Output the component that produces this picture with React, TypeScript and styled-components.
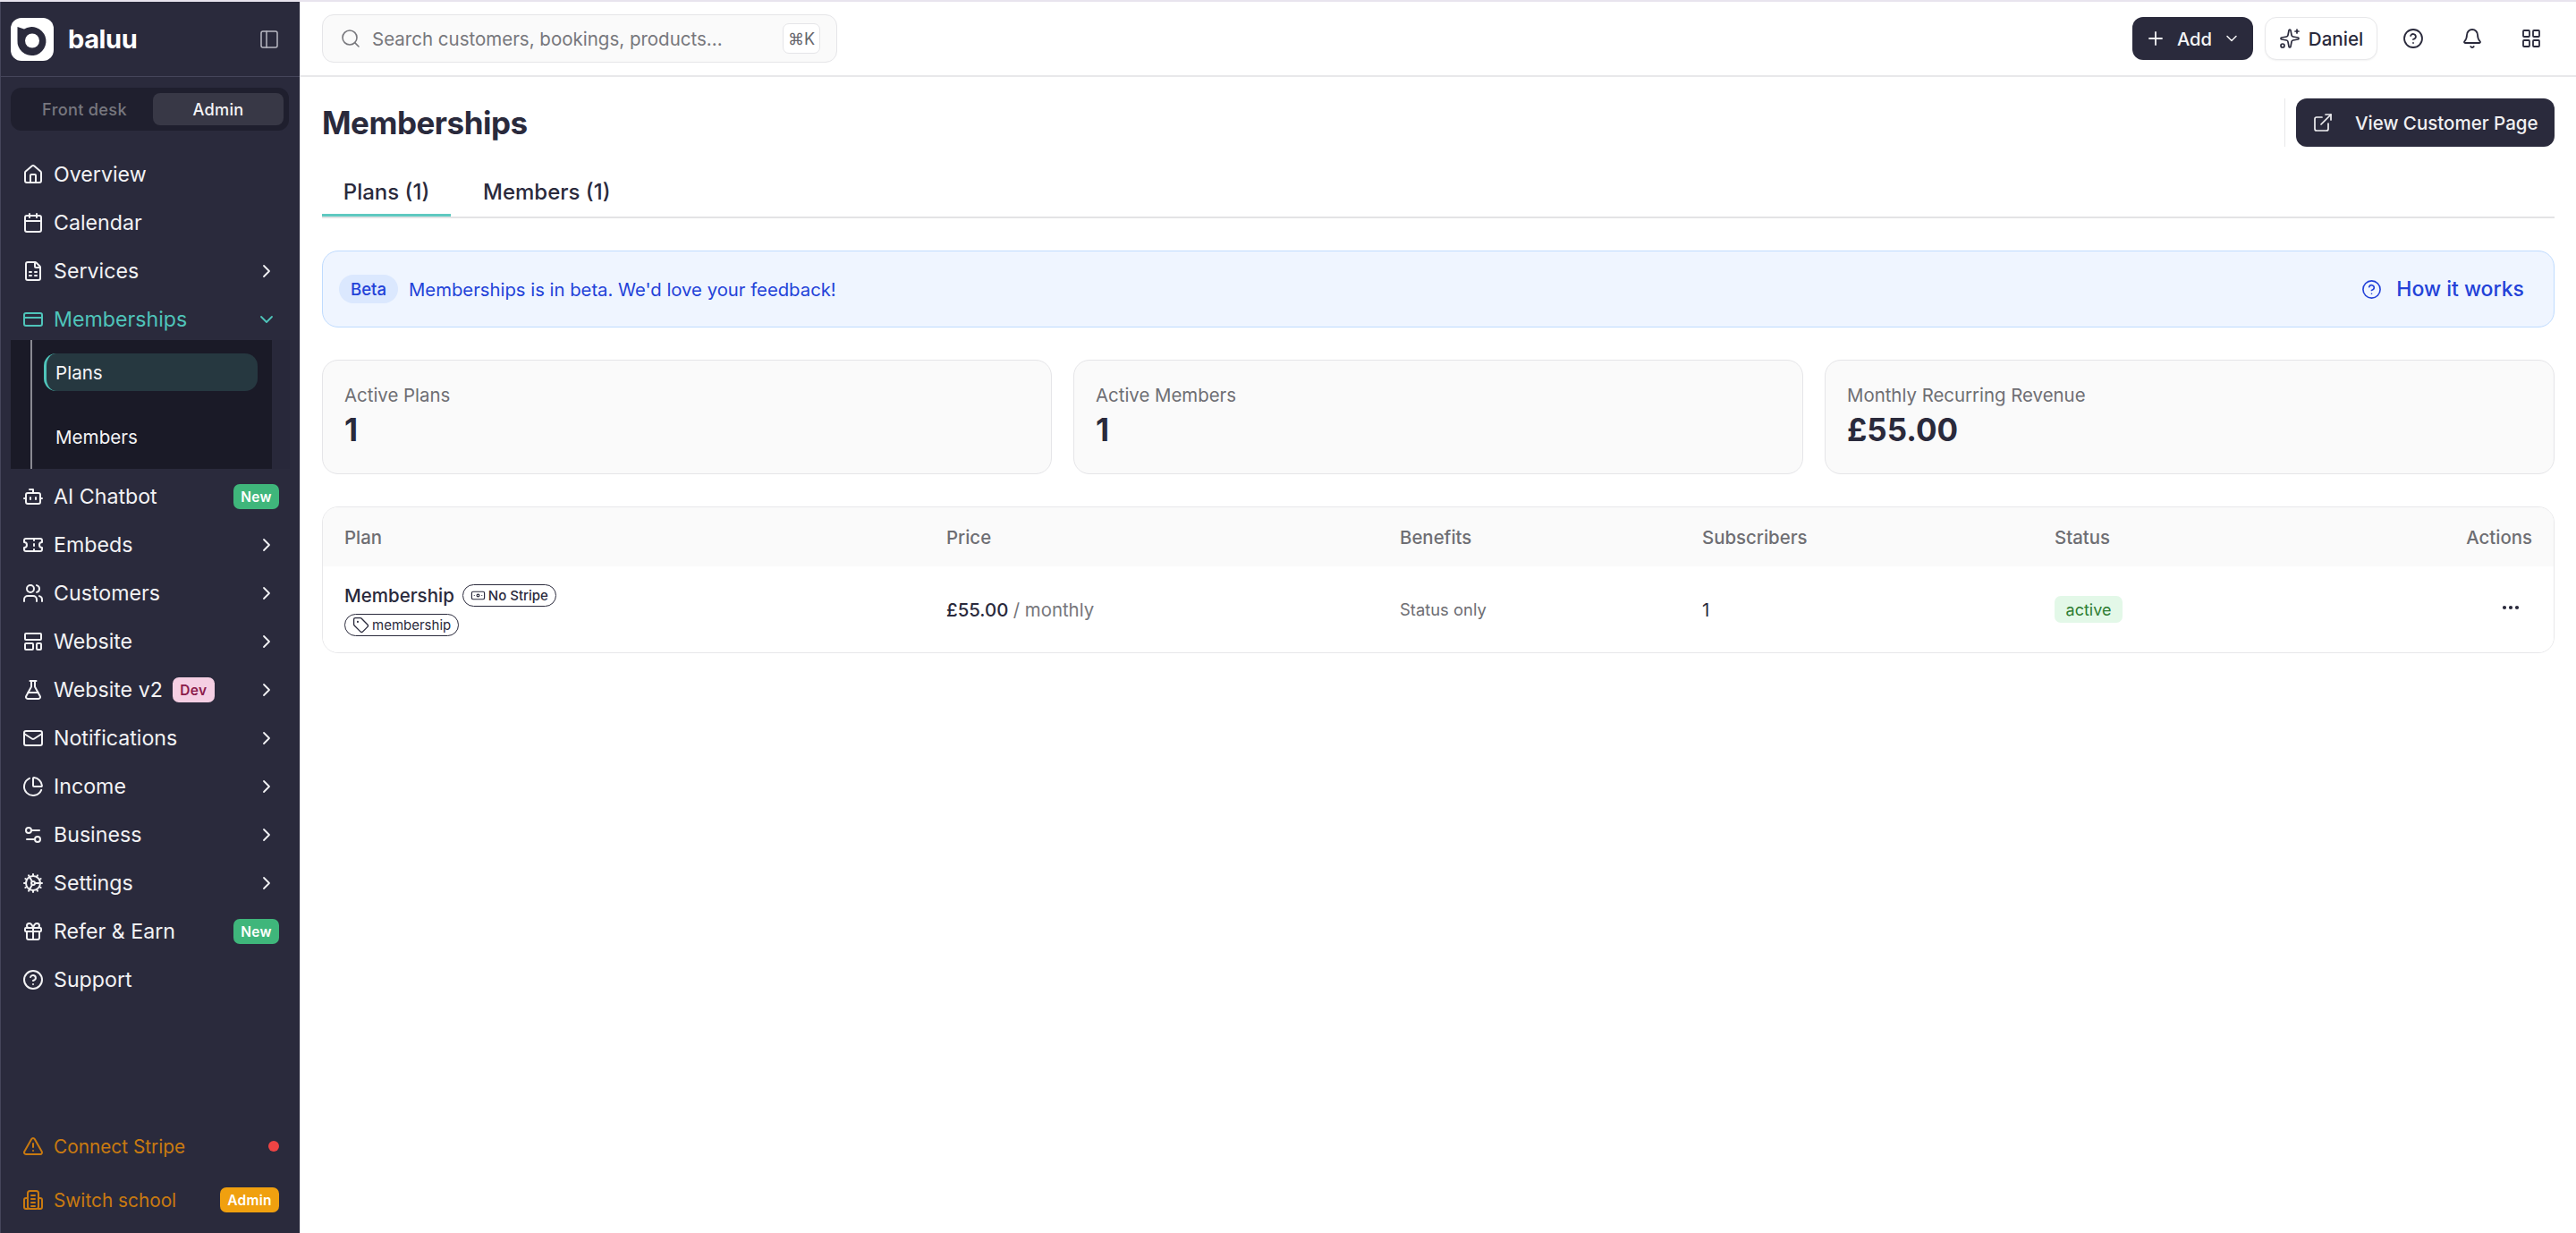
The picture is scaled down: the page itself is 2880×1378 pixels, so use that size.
import React from "react";
import styled, { createGlobalStyle } from "styled-components";
import {
  House, Calendar, FileSpreadsheet, CreditCard, Bot, Ticket, Users, LayoutTemplate, FlaskConical, Mail,
  ChartPie, Settings2, Cog, Gift, CircleHelp, TriangleAlert, PanelLeft, Search, Plus,
  ChevronDown, ChevronRight, Sparkles, Bell, LayoutGrid, ExternalLink, Tag, Banknote, Ellipsis,
} from "lucide-react";

const Global = createGlobalStyle`
  html, body { margin: 0; padding: 0; background: #fff; }
  body { font-family: Inter, "Liberation Sans", sans-serif; color: #2a2a3c; }
  * { box-sizing: border-box; }
  svg { flex: none; }
`;

const Shell = styled.div`
  display: flex;
  width: 2880px;
  height: 1378px;
  overflow: hidden;
  border-top: 2px solid #e8e4ee;
`;
const Sidebar = styled.aside`
  width: 336px;
  flex: none;
  display: flex;
  flex-direction: column;
  background: #2a2a3c;
  border-left: 1px solid #45455a;
  border-right: 1px solid #e6e6ea;
`;
const Brand = styled.div`
  height: 84px;
  flex: none;
  display: flex;
  align-items: center;
  padding: 0 22px 0 11px;
  border-bottom: 1px solid #45455a;
`;
const BrandName = styled.span`
  margin-left: 16px;
  flex: 1;
  font-size: 29px;
  font-weight: 700;
  letter-spacing: -0.4px;
  color: #fff;
`;
const Segmented = styled.div`
  margin: 12px 12px 0 11px;
  height: 48px;
  padding: 6px;
  display: grid;
  grid-template-columns: 1fr 146px;
  background: #1f1f2e;
  border-radius: 12px;
`;
const Segment = styled.div<{ $active?: boolean }>`
  display: flex;
  align-items: center;
  justify-content: center;
  font-size: 18.2px;
  font-weight: 500;
  letter-spacing: 0.3px;
  border-radius: 8px;
  color: ${(p) => (p.$active ? "#f4f4f6" : "#77777f")};
  background: ${(p) => (p.$active ? "#383846" : "transparent")};
`;
const Nav = styled.nav`
  margin-top: 24px;
  display: flex;
  flex-direction: column;
  gap: 4px;
  padding: 0 11px;
`;
const Item = styled.div<{ $tone?: "teal" | "amber" }>`
  height: 50px;
  flex: none;
  display: flex;
  align-items: center;
  gap: 11px;
  padding: 0 12px 0 13px;
  font-size: 23.2px;
  color: ${(p) => (p.$tone === "teal" ? "#4fc4ba" : p.$tone === "amber" ? "#c97a10" : "#f2f2f4")};
`;
const ItemLabel = styled.span<{ $grow?: boolean; $small?: boolean }>`
  flex: ${(p) => (p.$grow ? 1 : "none")};
  white-space: nowrap;
  font-size: ${(p) => (p.$small ? "20.8px" : "inherit")};
`;
const Chevron = styled.span<{ $inherit?: boolean }>`
  display: flex;
  margin-right: 2px;
  color: ${(p) => (p.$inherit ? "inherit" : "#f2f2f4")};
`;
const Badge = styled.span<{ $kind: "new" | "dev" | "admin" }>`
  display: inline-flex;
  align-items: center;
  justify-content: center;
  height: 28px;
  border-radius: 7px;
  font-size: 15.5px;
  font-weight: 600;
  letter-spacing: 0.3px;
  width: ${(p) => (p.$kind === "new" ? "51px" : p.$kind === "dev" ? "47px" : "66px")};
  margin-right: ${(p) => (p.$kind === "dev" ? "auto" : "0")};
  background: ${(p) => (p.$kind === "new" ? "#3fb67b" : p.$kind === "dev" ? "#f5cfe3" : "#f0a00f")};
  color: ${(p) => (p.$kind === "dev" ? "#8b1a4a" : "#fff")};
`;
const SubPanel = styled.div`
  margin: -6px 0 2px;
  height: 144px;
  background: #28283a;
  padding-right: 20px;
`;
const SubInner = styled.div`
  height: 100%;
  background: #1a1a27;
  padding: 15px 16px 0 37px;
  position: relative;
`;
const SubRail = styled.span`
  position: absolute;
  left: 22px;
  top: 0;
  bottom: 0;
  width: 2px;
  background: #8a8a92;
`;
const SubLink = styled.div<{ $active?: boolean }>`
  height: 42px;
  display: flex;
  align-items: center;
  padding-left: 10px;
  margin-bottom: 30px;
  font-size: 20.6px;
  color: #f4f4f6;
  border-radius: 14px;
  background: ${(p) => (p.$active ? "#263840" : "transparent")};
  border-left: 3px solid ${(p) => (p.$active ? "#4fc4ba" : "transparent")};
`;
const Bottom = styled.div`
  margin-top: auto;
  padding: 0 11px 12px;
  display: flex;
  flex-direction: column;
  gap: 10px;
`;
const Dot = styled.span`
  width: 12px;
  height: 12px;
  border-radius: 50%;
  background: #ef4444;
`;
const Main = styled.main`
  flex: 1;
  min-width: 0;
  display: flex;
  flex-direction: column;
`;
const TopBar = styled.header`
  height: 84px;
  flex: none;
  display: flex;
  align-items: center;
  padding: 0 24px;
  border-bottom: 2px solid #e8e8ea;
`;
const SearchBox = styled.div`
  width: 576px;
  height: 54px;
  display: flex;
  align-items: center;
  gap: 12px;
  padding: 0 18px 0 19px;
  background: #fafafa;
  border: 1px solid #e5e5e8;
  border-radius: 13px;
  font-size: 20.5px;
  color: #77777c;
`;
const SearchText = styled.span`
  flex: 1;
  white-space: nowrap;
`;
const Kbd = styled.span`
  width: 42px;
  height: 34px;
  display: flex;
  align-items: center;
  justify-content: center;
  background: #fff;
  border: 1px solid #e5e5e8;
  border-radius: 7px;
  font-size: 18px;
  color: #66666c;
`;
const TopActions = styled.div`
  margin-left: auto;
  display: flex;
  align-items: center;
`;
const AddButton = styled.div`
  width: 135px;
  height: 48px;
  display: flex;
  align-items: center;
  justify-content: center;
  gap: 12px;
  background: #2a2a3c;
  border-radius: 12px;
  color: #f4f4f6;
  font-size: 20.2px;
  font-weight: 500;
`;
const ProfileButton = styled.div`
  margin-left: 13px;
  width: 126px;
  height: 48px;
  display: flex;
  align-items: center;
  justify-content: center;
  gap: 9px;
  background: #fff;
  border: 1px solid #e8e8ea;
  border-radius: 13px;
  box-shadow: 0 1px 2px rgba(0, 0, 0, 0.05);
  font-size: 20.6px;
  font-weight: 500;
`;
const IconButton = styled.div`
  width: 66px;
  display: flex;
  justify-content: center;
  color: #2a2a3c;
`;
const IconRow = styled.div`
  display: flex;
  margin: 0 -7px 0 7px;
`;
const Content = styled.div`
  padding: 24px 24px 0;
  display: flex;
  flex-direction: column;
`;
const TitleRow = styled.div`
  display: flex;
  align-items: center;
  justify-content: space-between;
  height: 54px;
`;
const Title = styled.h1`
  margin: 0;
  font-size: 35px;
  font-weight: 700;
  letter-spacing: -0.5px;
  color: #2a2a3c;
`;
const TitleAction = styled.div`
  display: flex;
  height: 54px;
  padding-left: 12px;
  border-left: 1px solid #e8e8ea;
`;
const ViewButton = styled.div`
  width: 289px;
  display: flex;
  align-items: center;
  gap: 24px;
  padding-left: 18px;
  background: #2a2a3c;
  border-radius: 12px;
  color: #f0f0f2;
  font-size: 20.5px;
  font-weight: 500;
  white-space: nowrap;
`;
const Tabs = styled.div`
  margin-top: 26px;
  height: 54px;
  display: flex;
  border-bottom: 2px solid #e3e3e5;
`;
const Tab = styled.div<{ $active?: boolean }>`
  width: ${(p) => (p.$active ? "144px" : "auto")};
  padding: 0 25px;
  height: 52px;
  display: flex;
  align-items: center;
  justify-content: center;
  font-size: 24px;
  font-weight: 450;
  white-space: nowrap;
  border-bottom: 3px solid ${(p) => (p.$active ? "#5fc9c0" : "transparent")};
  margin-left: ${(p) => (p.$active ? "0" : "11px")};
`;
const Banner = styled.div`
  margin-top: 36px;
  height: 86px;
  display: flex;
  align-items: center;
  padding: 0 33px 0 18px;
  background: #eff5ff;
  border: 1px solid #bfdbfe;
  border-radius: 18px;
  color: #2342d8;
`;
const BetaPill = styled.span`
  width: 66px;
  height: 32px;
  display: flex;
  align-items: center;
  justify-content: center;
  background: #dbe8fe;
  border-radius: 16px;
  font-size: 18.6px;
  font-weight: 500;
`;
const BannerText = styled.span`
  margin-left: 12px;
  flex: 1;
  font-size: 20.3px;
`;
const HowLink = styled.span`
  display: flex;
  align-items: center;
  gap: 16px;
  font-size: 23px;
  font-weight: 500;
`;
const Stats = styled.div`
  margin-top: 36px;
  display: grid;
  grid-template-columns: repeat(3, 1fr);
  gap: 24px;
`;
const StatCard = styled.div`
  height: 128px;
  padding: 24px 24px 0;
  background: #fafafa;
  border: 1px solid #e5e5e8;
  border-radius: 18px;
`;
const StatLabel = styled.div`
  font-size: 20.4px;
  line-height: 30px;
  color: #6e6e73;
`;
const StatValue = styled.div`
  margin-top: 1px;
  font-size: 35px;
  line-height: 44px;
  font-weight: 700;
  color: #2a2a3c;
`;
const Table = styled.div`
  margin-top: 36px;
  border: 1px solid #e8e8ea;
  border-radius: 18px;
  overflow: hidden;
`;
const Row = styled.div<{ $head?: boolean }>`
  display: grid;
  grid-template-columns: 673px 507px 338px 394px 1fr;
  align-items: center;
  padding: 0 24px;
  height: ${(p) => (p.$head ? "66px" : "96px")};
  background: ${(p) => (p.$head ? "#fafafa" : "#fff")};
`;
const HeadCell = styled.div<{ $split?: boolean }>`
  font-size: 20.4px;
  font-weight: 450;
  color: #6e6e73;
  display: flex;
  justify-content: ${(p) => (p.$split ? "space-between" : "flex-start")};
`;
const PlanCell = styled.div`
  display: flex;
  flex-direction: column;
  align-items: flex-start;
  gap: 8px;
  padding-top: 2px;
`;
const PlanLine = styled.div`
  display: flex;
  align-items: center;
  gap: 9px;
  font-size: 20.5px;
  font-weight: 450;
`;
const Chip = styled.span`
  display: inline-flex;
  align-items: center;
  gap: 3px;
  height: 25px;
  padding: 0 8px;
  border: 1.5px solid #2a2a3c;
  border-radius: 13px;
  font-size: 15px;
  white-space: nowrap;
`;
const Price = styled.div`
  font-size: 20.4px;
  font-weight: 450;
  color: #2a2a3c;
`;
const Period = styled.span`
  font-weight: 400;
  color: #77777c;
`;
const Muted = styled.div`
  font-size: 18.4px;
  color: #6e6e73;
`;
const Count = styled.div`
  font-size: 20.4px;
`;
const StatusCell = styled.div`
  display: flex;
  align-items: center;
  justify-content: space-between;
`;
const Active = styled.span`
  width: 76px;
  height: 30px;
  display: flex;
  align-items: center;
  justify-content: center;
  background: #e3f8e8;
  border-radius: 7px;
  font-size: 18px;
  color: #2e7d32;
`;
const Dots = styled.span`
  display: flex;
  margin: -4px 12px 0 0;
  color: #2a2a3c;
`;

const Logo = () => (
  <svg width="48" height="48" viewBox="0 0 48 48">
    <rect width="48" height="48" rx="12" fill="#fff" />
    <path d="M7.5 10 L15 12.5 A16 16 0 1 1 7.5 25 Z" fill="#2a2a3c" />
    <circle cx="24" cy="25.5" r="8" fill="#fff" />
  </svg>
);

const SchoolIcon = () => (
  <svg width="24" height="24" viewBox="0 0 24 24" fill="none" stroke="currentColor" strokeWidth="2" strokeLinecap="round" strokeLinejoin="round">
    <rect x="6" y="2" width="12" height="20" rx="2.5" />
    <path d="M6 10H4a2 2 0 0 0-2 2v8a2 2 0 0 0 2 2h2" />
    <path d="M18 10h2a2 2 0 0 1 2 2v8a2 2 0 0 1-2 2h-2" />
    <path d="M10 7h4M10 11h4M10 15h4M10 19h4" />
  </svg>
);

const icon = { size: 24, strokeWidth: 2 };
const nav1 = [
  { label: "AI Chatbot", Icon: Bot, badge: "new" as const },
  { label: "Embeds", Icon: Ticket, more: true },
  { label: "Customers", Icon: Users, more: true },
  { label: "Website", Icon: LayoutTemplate, more: true },
  { label: "Website v2", Icon: FlaskConical, more: true, dev: true },
  { label: "Notifications", Icon: Mail, more: true },
  { label: "Income", Icon: ChartPie, more: true },
  { label: "Business", Icon: Settings2, more: true },
  { label: "Settings", Icon: Cog, more: true },
  { label: "Refer & Earn", Icon: Gift, badge: "new" as const },
  { label: "Support", Icon: CircleHelp },
];

const Arrow = () => (
  <Chevron>
    <ChevronRight size={24} strokeWidth={1.8} />
  </Chevron>
);

export default function App() {
  return (
    <Shell>
      <Global />
      <Sidebar>
        <Brand>
          <Logo />
          <BrandName>baluu</BrandName>
          <PanelLeft size={24} strokeWidth={1.5} color="#b9b9c2" />
        </Brand>
        <Segmented>
          <Segment>Front desk</Segment>
          <Segment $active>Admin</Segment>
        </Segmented>
        <Nav>
          <Item><House {...icon} /><ItemLabel $grow>Overview</ItemLabel></Item>
          <Item><Calendar {...icon} /><ItemLabel $grow>Calendar</ItemLabel></Item>
          <Item><FileSpreadsheet {...icon} /><ItemLabel $grow>Services</ItemLabel><Arrow /></Item>
          <Item $tone="teal">
            <CreditCard {...icon} />
            <ItemLabel $grow>Memberships</ItemLabel>
            <Chevron $inherit><ChevronDown size={24} strokeWidth={1.8} /></Chevron>
          </Item>
          <SubPanel>
            <SubInner>
              <SubRail />
              <SubLink $active>Plans</SubLink>
              <SubLink>Members</SubLink>
            </SubInner>
          </SubPanel>
          {nav1.map(({ label, Icon, badge, more, dev }) => (
            <Item key={label}>
              <Icon {...icon} />
              <ItemLabel $grow={!dev}>{label}</ItemLabel>
              {dev && <Badge $kind="dev">Dev</Badge>}
              {badge && <Badge $kind={badge}>New</Badge>}
              {more && <Arrow />}
            </Item>
          ))}
        </Nav>
        <Bottom>
          <Item $tone="amber">
            <TriangleAlert {...icon} />
            <ItemLabel $grow $small>Connect Stripe</ItemLabel>
            <Dot />
          </Item>
          <Item $tone="amber">
            <SchoolIcon />
            <ItemLabel $grow $small>Switch school</ItemLabel>
            <Badge $kind="admin">Admin</Badge>
          </Item>
        </Bottom>
      </Sidebar>
      <Main>
        <TopBar>
          <SearchBox>
            <Search size={24} strokeWidth={1.6} />
            <SearchText>Search customers, bookings, products...</SearchText>
            <Kbd>⌘K</Kbd>
          </SearchBox>
          <TopActions>
            <AddButton>
              <Plus size={24} strokeWidth={1.8} />
              Add
              <ChevronDown size={20} strokeWidth={1.8} />
            </AddButton>
            <ProfileButton>
              <Sparkles size={24} strokeWidth={1.7} />
              Daniel
            </ProfileButton>
            <IconRow>
              <IconButton><CircleHelp size={24} strokeWidth={1.8} /></IconButton>
              <IconButton><Bell size={24} strokeWidth={1.8} /></IconButton>
              <IconButton><LayoutGrid size={24} strokeWidth={1.8} /></IconButton>
            </IconRow>
          </TopActions>
        </TopBar>
        <Content>
          <TitleRow>
            <Title>Memberships</Title>
            <TitleAction>
              <ViewButton>
                <ExternalLink size={24} strokeWidth={1.7} />
                View Customer Page
              </ViewButton>
            </TitleAction>
          </TitleRow>
          <Tabs>
            <Tab $active>Plans (1)</Tab>
            <Tab>Members (1)</Tab>
          </Tabs>
          <Banner>
            <BetaPill>Beta</BetaPill>
            <BannerText>Memberships is in beta. We'd love your feedback!</BannerText>
            <HowLink>
              <CircleHelp size={23} strokeWidth={1.7} />
              How it works
            </HowLink>
          </Banner>
          <Stats>
            <StatCard><StatLabel>Active Plans</StatLabel><StatValue>1</StatValue></StatCard>
            <StatCard><StatLabel>Active Members</StatLabel><StatValue>1</StatValue></StatCard>
            <StatCard><StatLabel>Monthly Recurring Revenue</StatLabel><StatValue>£55.00</StatValue></StatCard>
          </Stats>
          <Table>
            <Row $head>
              <HeadCell>Plan</HeadCell>
              <HeadCell>Price</HeadCell>
              <HeadCell>Benefits</HeadCell>
              <HeadCell>Subscribers</HeadCell>
              <HeadCell $split><span>Status</span><span>Actions</span></HeadCell>
            </Row>
            <Row>
              <PlanCell>
                <PlanLine>
                  Membership
                  <Chip><Banknote size={17} strokeWidth={1.7} />No Stripe</Chip>
                </PlanLine>
                <Chip><Tag size={19} strokeWidth={1.7} />membership</Chip>
              </PlanCell>
              <Price>£55.00 <Period>/ monthly</Period></Price>
              <Muted>Status only</Muted>
              <Count>1</Count>
              <StatusCell>
                <Active>active</Active>
                <Dots><Ellipsis size={24} strokeWidth={2.2} /></Dots>
              </StatusCell>
            </Row>
          </Table>
        </Content>
      </Main>
    </Shell>
  );
}
